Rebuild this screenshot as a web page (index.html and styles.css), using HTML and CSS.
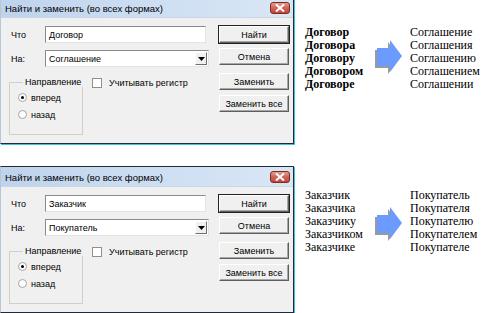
FILE: index.html
```html
<!DOCTYPE html>
<html lang="ru">
<head>
<meta charset="utf-8">
<link rel="stylesheet" href="styles.css">
</head>
<body>
<div class="page">
  <section class="scene scene-one">
    <div class="dialog">
      <div class="titlebar">
        <span class="title">Найти и заменить (во всех формах)</span>
        <span class="close"><svg width="10" height="8" viewBox="0 0 10 8"><path d="M1 0.5 L9 7.5 M9 0.5 L1 7.5" stroke="#fff" stroke-width="2"/></svg></span>
      </div>
      <div class="body">
        <div class="form">
          <div class="row"><span class="lbl">Что</span><div class="field">Договор</div></div>
          <div class="row"><span class="lbl">На:</span><div class="field combo"><span>Соглашение</span><span class="dd"><svg width="7" height="4" viewBox="0 0 7 4"><path d="M0 0 H7 L3.5 4 Z" fill="#000"/></svg></span></div></div>
          <div class="options">
            <fieldset class="group">
              <legend>Направление</legend>
              <div class="radio"><span class="rb on"></span>вперед</div>
              <div class="radio"><span class="rb"></span>назад</div>
            </fieldset>
            <div class="check"><span class="cb"></span>Учитывать регистр</div>
          </div>
        </div>
        <div class="buttons">
          <div class="btn default">Найти</div>
          <div class="btn">Отмена</div>
          <div class="btn gap">Заменить</div>
          <div class="btn">Заменить все</div>
        </div>
      </div>
    </div>
    <div class="words">
      <div class="col col-from bold">
        <span>Договор</span><span>Договора</span><span>Договору</span><span>Договором</span><span>Договоре</span>
      </div>
      <svg class="arrow" width="30" height="36" viewBox="0 0 30 36">
        <polygon points="2,11 15,11 15,3 27,19 15,35 15,29 2,29" fill="#9a9a9a"/>
        <polygon points="4,9 17,9 17,1 29,17 17,33 17,27 4,27" fill="#6b9bff"/>
      </svg>
      <div class="col col-to">
        <span>Соглашение</span><span>Соглашения</span><span>Соглашению</span><span>Соглашением</span><span>Соглашении</span>
      </div>
    </div>
  </section>
  <section class="scene scene-two">
    <div class="dialog">
      <div class="titlebar">
        <span class="title">Найти и заменить (во всех формах)</span>
        <span class="close"><svg width="10" height="8" viewBox="0 0 10 8"><path d="M1 0.5 L9 7.5 M9 0.5 L1 7.5" stroke="#fff" stroke-width="2"/></svg></span>
      </div>
      <div class="body">
        <div class="form">
          <div class="row"><span class="lbl">Что</span><div class="field">Заказчик</div></div>
          <div class="row"><span class="lbl">На:</span><div class="field combo"><span>Покупатель</span><span class="dd"><svg width="7" height="4" viewBox="0 0 7 4"><path d="M0 0 H7 L3.5 4 Z" fill="#000"/></svg></span></div></div>
          <div class="options">
            <fieldset class="group">
              <legend>Направление</legend>
              <div class="radio"><span class="rb on"></span>вперед</div>
              <div class="radio"><span class="rb"></span>назад</div>
            </fieldset>
            <div class="check"><span class="cb"></span>Учитывать регистр</div>
          </div>
        </div>
        <div class="buttons">
          <div class="btn default">Найти</div>
          <div class="btn">Отмена</div>
          <div class="btn gap">Заменить</div>
          <div class="btn">Заменить все</div>
        </div>
      </div>
    </div>
    <div class="words">
      <div class="col col-from">
        <span>Заказчик</span><span>Заказчика</span><span>Заказчику</span><span>Заказчиком</span><span>Заказчике</span>
      </div>
      <svg class="arrow" width="30" height="36" viewBox="0 0 30 36">
        <polygon points="2,11 15,11 15,3 27,19 15,35 15,29 2,29" fill="#9a9a9a"/>
        <polygon points="4,9 17,9 17,1 29,17 17,33 17,27 4,27" fill="#6b9bff"/>
      </svg>
      <div class="col col-to">
        <span>Покупатель</span><span>Покупателя</span><span>Покупателю</span><span>Покупателем</span><span>Покупателе</span>
      </div>
    </div>
  </section>
</div>
</body>
</html>
```

FILE: styles.css
```css
html, body {
  margin: 0;
  padding: 0;
  background: #fff;
  width: 483px;
  height: 313px;
  overflow: hidden;
}
.page {
  display: flex;
  flex-direction: column;
  margin-top: -3px;
  font-family: "Liberation Sans", Arial, sans-serif;
  font-size: 9px;
  color: #000;
}
.scene {
  display: flex;
  flex-shrink: 0;
}
.scene-one {
  height: 169px;
}
.scene-two {
  height: 147px;
}
.dialog {
  width: 292px;
  height: 145px;
  border: 1px solid #1f2b38;
  border-left-color: #b8c7d8;
  box-shadow: 1px 1px 0 #3ec2db;
  background: #f0f0f0;
  display: flex;
  flex-direction: column;
}
.titlebar {
  height: 20px;
  flex-shrink: 0;
  display: flex;
  align-items: center;
  justify-content: space-between;
  padding: 1px 3px 0 4px;
  background: linear-gradient(90deg, #bed3ec 0%, #cfe0f3 60%, #d9e6f5 100%);
  border-bottom: 1px solid #c9d6e4;
  box-sizing: border-box;
  font-size: 9.5px;
}
.close {
  width: 20px;
  height: 12px;
  border: 1px solid #7e2a20;
  border-radius: 3px;
  background: linear-gradient(180deg, #e5a095 0%, #d2665a 45%, #c0483b 100%);
  display: flex;
  align-items: center;
  justify-content: center;
  box-sizing: border-box;
}
.body {
  flex: 1;
  display: flex;
  padding: 8px 5px 0 10px;
}
.form {
  width: 198px;
  display: flex;
  flex-direction: column;
  gap: 7px;
}
.row {
  display: flex;
  align-items: center;
  height: 17px;
}
.lbl {
  width: 34px;
}
.field {
  width: 161px;
  height: 17px;
  box-sizing: border-box;
  background: #fff;
  border: 1px solid;
  border-color: #8a8a8a #e3e3e3 #e3e3e3 #8a8a8a;
  padding: 0 3px;
  display: flex;
  align-items: center;
}
.combo {
  width: 164px;
  justify-content: space-between;
  padding-right: 1px;
}
.dd {
  width: 12px;
  height: 13px;
  box-sizing: border-box;
  background: #f0f0f0;
  border: 1px solid;
  border-color: #fff #6f6f6f #6f6f6f #fff;
  display: flex;
  align-items: center;
  justify-content: center;
}
.options {
  display: flex;
  align-items: flex-start;
  margin-top: 3px;
}
.group {
  margin: 0 0 0 -2px;
  min-width: 0;
  width: 74px;
  height: 58px;
  box-sizing: border-box;
  border: 1px solid #d0d0c8;
  padding: 2px 0 0 8px;
}
.group legend {
  padding: 0 2px;
  margin-left: 5px;
}
.radio {
  display: flex;
  align-items: center;
  height: 17px;
  gap: 4px;
}
.rb {
  width: 9px;
  height: 9px;
  border-radius: 50%;
  background: #fff;
  border: 1px solid #a5a5a5;
  box-sizing: border-box;
  position: relative;
}
.rb.on::after {
  content: "";
  position: absolute;
  left: 2px;
  top: 2px;
  width: 3px;
  height: 3px;
  border-radius: 50%;
  background: #000;
}
.check {
  display: flex;
  align-items: center;
  gap: 7px;
  margin-left: 9px;
  margin-top: 1px;
}
.cb {
  width: 10px;
  height: 10px;
  box-sizing: border-box;
  background: #fff;
  border: 1px solid #8f8f8f;
}
.buttons {
  margin-left: 10px;
  display: flex;
  flex-direction: column;
  gap: 5px;
}
.btn {
  width: 70px;
  height: 17px;
  box-sizing: border-box;
  background: #f0f0f0;
  border: 1px solid;
  border-color: #fff #5e5e5e #5e5e5e #fff;
  box-shadow: inset -1px -1px 0 #a8a8a8;
  display: flex;
  align-items: center;
  justify-content: center;
}
.btn.default {
  outline: 1px solid #222;
}
.btn.gap {
  margin-top: 3px;
}
.words {
  display: flex;
  align-items: flex-start;
  margin-left: 11px;
  font-family: "Liberation Serif", "Times New Roman", serif;
  font-size: 12px;
  line-height: 13px;
}
.col {
  display: flex;
  flex-direction: column;
}
.col-from {
  width: 69px;
}
.bold {
  font-weight: bold;
}
.arrow {
  flex-shrink: 0;
  margin-left: -1px;
}
.col-to {
  margin-left: 7px;
}
.scene-one .words {
  margin-top: 29px;
}
.scene-one .arrow {
  margin-top: 13px;
}
.scene-two .words {
  margin-top: 23px;
}
.scene-two .arrow {
  margin-top: 17px;
}
```
